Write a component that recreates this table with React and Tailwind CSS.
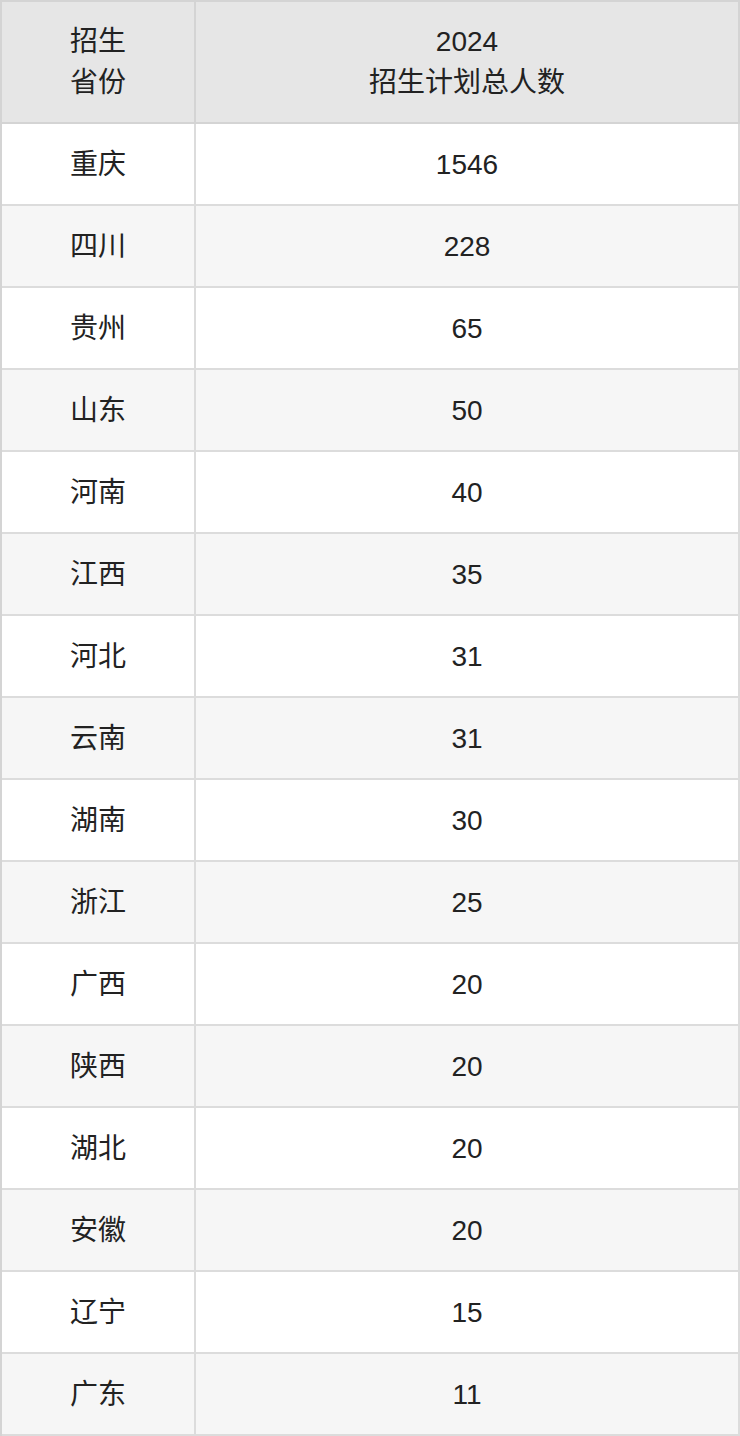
import React from "react";

const rows = [
  ["重庆", "1546"],
  ["四川", "228"],
  ["贵州", "65"],
  ["山东", "50"],
  ["河南", "40"],
  ["江西", "35"],
  ["河北", "31"],
  ["云南", "31"],
  ["湖南", "30"],
  ["浙江", "25"],
  ["广西", "20"],
  ["陕西", "20"],
  ["湖北", "20"],
  ["安徽", "20"],
  ["辽宁", "15"],
  ["广东", "11"],
];

export default function App() {
  return (
    <div
      className="w-[740px] border-l-2 border-t-2 border-[#d4d4d4] text-[#222] text-[28px] leading-[41px]"
      style={{ fontFamily: '"Liberation Sans", "Noto Sans CJK SC", sans-serif' }}
    >
      <div className="flex h-[122px] bg-[#e6e6e6]">
        <div className="w-[194px] border-r-2 border-b-2 border-[#d4d4d4] flex items-center justify-center text-center">
          <div>
            招生
            <br />
            省份
          </div>
        </div>
        <div className="flex-1 border-r-2 border-b-2 border-[#d4d4d4] flex items-center justify-center text-center">
          <div>
            2024
            <br />
            招生计划总人数
          </div>
        </div>
      </div>
      {rows.map(([p, n], i) => (
        <div
          key={p}
          className={`flex h-[82px] ${i % 2 === 1 ? "bg-[#f6f6f6]" : "bg-white"}`}
        >
          <div className="w-[194px] border-r-2 border-b-2 border-[#dcdcdc] flex items-center justify-center">
            {p}
          </div>
          <div className="flex-1 border-r-2 border-b-2 border-[#dcdcdc] flex items-center justify-center">
            {n}
          </div>
        </div>
      ))}
    </div>
  );
}
